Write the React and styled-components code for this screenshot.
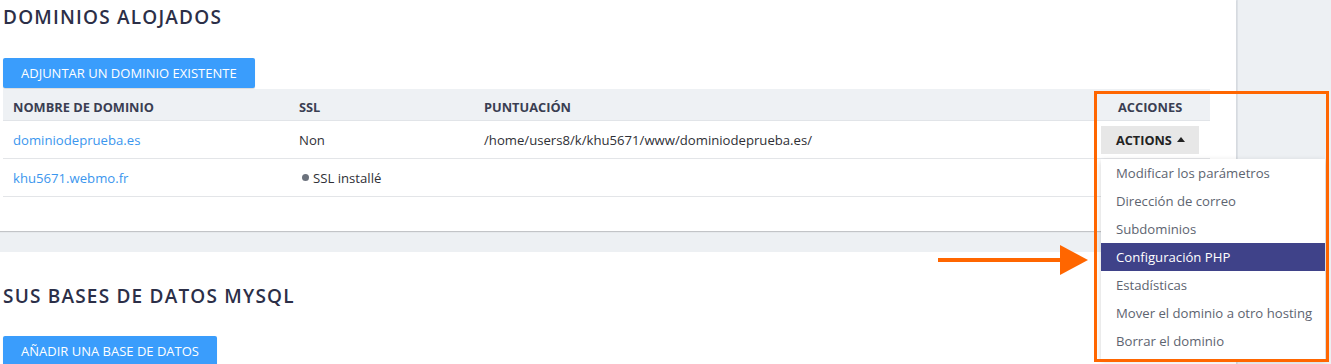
import React from "react"
import styled, { createGlobalStyle } from "styled-components"

const GlobalStyle = createGlobalStyle`
  body {
    margin: 0;
    background: #edf0f3;
    font-family: "Open Sans", "Liberation Sans", sans-serif;
    color: #33343b;
  }
`

const Page = styled.div`
  display: flex;
  height: 364px;
  overflow: hidden;
  position: relative;
`

const Main = styled.div`
  width: 1236px;
  display: flex;
  flex-direction: column;
  gap: 21px;
`

const Sidebar = styled.div`
  flex: 1;
  border-left: 2px solid #dde1e6;
  background: #edf0f3;
`

const Card = styled.section`
  background: #fff;
  padding: ${({ $top }) => $top}px 26px ${({ $bottom }) => $bottom}px 3px;
  box-shadow: 0 1px 1px rgba(0, 0, 0, 0.18);
  position: relative;
`

const Title = styled.h2`
  margin: 0;
  height: 34px;
  line-height: 34px;
  font-size: 19px;
  font-weight: 600;
  letter-spacing: 1.2px;
  color: #2c2f48;
  font-family: "Open Sans", "Liberation Sans", sans-serif;
`

const PrimaryButton = styled.button`
  margin-top: ${({ $gap }) => $gap}px;
  height: 30px;
  padding: 0 18px;
  border: none;
  border-radius: 2px;
  background: #3a9dfc;
  color: #fff;
  font-family: "Open Sans", "Liberation Sans", sans-serif;
  font-size: 13px;
  text-transform: uppercase;
  box-shadow: 0 1px 1px rgba(0, 0, 0, 0.15);
`

const Table = styled.div`
  margin-top: 1px;
  display: grid;
  grid-template-columns: 286px 185px 624px 112px;
`

const HeadCell = styled.div`
  height: 32px;
  display: flex;
  align-items: center;
  padding: 4px 0 0 ${({ $pad }) => $pad || 10}px;
  background: #eef1f4;
  border-bottom: 1px solid #e1e4e8;
  box-sizing: border-box;
  font-size: 12.8px;
  font-weight: 700;
  color: #3a3e52;
  text-transform: uppercase;
`

const Cell = styled.div`
  height: 38px;
  display: flex;
  align-items: center;
  padding-left: ${({ $pad }) => ($pad === undefined ? 10 : $pad)}px;
  border-bottom: 1px solid #e3e5e8;
  box-sizing: border-box;
  font-size: 13.15px;
  color: #2f3036;
  position: relative;
`

const DomainLink = styled.a`
  color: #3b96ee;
  text-decoration: none;
  font-size: 13.15px;
`

const StatusDot = styled.span`
  width: 7px;
  height: 7px;
  border-radius: 50%;
  background: #6c727d;
  margin: 0 4px 0 3px;
`

const ActionsButton = styled.button`
  height: 28px;
  width: 98px;
  padding: 0 0 0 15px;
  display: flex;
  align-items: center;
  gap: 5px;
  border: none;
  background: #e7e7e7;
  font-family: "Open Sans", "Liberation Sans", sans-serif;
  font-size: 12.7px;
  font-weight: 700;
  color: #222;
`

const Menu = styled.ul`
  position: absolute;
  top: 38px;
  left: 3px;
  width: 224px;
  margin: 0;
  padding: 0 0 4px;
  list-style: none;
  background: #fff;
  box-shadow: 0 2px 6px rgba(0, 0, 0, 0.18);
  z-index: 2;
`

const MenuItem = styled.li`
  height: 28px;
  display: flex;
  align-items: center;
  padding-left: 15px;
  font-size: 13.15px;
  color: ${({ $active }) => ($active ? "#ffffff" : "#5d6470")};
  background: ${({ $active }) => ($active ? "#3f4289" : "transparent")};
`

const Highlight = styled.div`
  position: absolute;
  left: 1094px;
  top: 91px;
  width: 235px;
  height: 271px;
  box-sizing: border-box;
  border: 3px solid #ff6600;
  z-index: 3;
  pointer-events: none;
`

const Arrow = styled.svg`
  position: absolute;
  left: 936px;
  top: 244px;
  z-index: 3;
`

const menuItems = [
  "Modificar los parámetros",
  "Dirección de correo",
  "Subdominios",
  "Configuración PHP",
  "Estadísticas",
  "Mover el dominio a otro hosting",
  "Borrar el dominio",
]

export default function App() {
  return (
    <>
      <GlobalStyle />
      <Page>
        <Main>
          <Card $top={0} $bottom={34}>
            <Title>DOMINIOS ALOJADOS</Title>
            <PrimaryButton $gap={24}>Adjuntar un dominio existente</PrimaryButton>
            <Table>
              <HeadCell>Nombre de dominio</HeadCell>
              <HeadCell>SSL</HeadCell>
              <HeadCell>Puntuación</HeadCell>
              <HeadCell $pad={20}>Acciones</HeadCell>

              <Cell><DomainLink href="#">dominiodeprueba.es</DomainLink></Cell>
              <Cell>Non</Cell>
              <Cell>/home/users8/k/khu5671/www/dominiodeprueba.es/</Cell>
              <Cell $pad={3}>
                <ActionsButton>
                  ACTIONS
                  <svg width="8" height="5" viewBox="0 0 8 5">
                    <path d="M0 5 L4 0 L8 5 Z" fill="#222" />
                  </svg>
                </ActionsButton>
                <Menu>
                  {menuItems.map((item) => (
                    <MenuItem key={item} $active={item === "Configuración PHP"}>
                      {item}
                    </MenuItem>
                  ))}
                </Menu>
              </Cell>

              <Cell><DomainLink href="#">khu5671.webmo.fr</DomainLink></Cell>
              <Cell><StatusDot />SSL installé</Cell>
              <Cell />
              <Cell />
            </Table>
          </Card>
          <Card $top={27} $bottom={0}>
            <Title>SUS BASES DE DATOS MYSQL</Title>
            <PrimaryButton $gap={23}>Añadir una base de datos</PrimaryButton>
          </Card>
        </Main>
        <Sidebar />
        <Highlight />
        <Arrow width="154" height="32" viewBox="0 0 154 32">
          <rect x="2" y="14" width="124" height="4" fill="#ff6600" />
          <path d="M124 1 L152 16 L124 31 Z" fill="#ff6600" />
        </Arrow>
      </Page>
    </>
  )
}
